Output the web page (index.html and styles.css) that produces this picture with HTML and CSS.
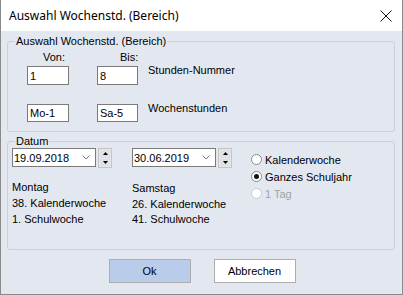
FILE: index.html
```html
<!DOCTYPE html>
<html lang="de">
<head>
    <meta charset="UTF-8">
    <title>Auswahl Wochenstd. (Bereich)</title>
    <link rel="stylesheet" href="styles.css">
</head>
<body>
    <div class="window">
        <div class="titlebar">
            <span class="title">Auswahl Wochenstd. (Bereich)</span>
            <svg class="close" width="12" height="12" viewBox="0 0 12 12">
                <path d="M0.5 0.5 L11.5 11.5 M11.5 0.5 L0.5 11.5" stroke="#111" stroke-width="1" fill="none"/>
            </svg>
        </div>

        <div class="content">
            <fieldset class="group">
                <legend>Auswahl Wochenstd. (Bereich)</legend>
                <div class="range">
                    <div class="range-row">
                        <span class="head von">Von:</span>
                        <span class="head bis">Bis:</span>
                    </div>
                    <div class="range-row">
                        <input type="text" class="field first" value="1">
                        <input type="text" class="field second" value="8">
                        <span class="row-label">Stunden-Nummer</span>
                    </div>
                    <div class="range-row lower">
                        <input type="text" class="field first" value="Mo-1">
                        <input type="text" class="field second" value="Sa-5">
                        <span class="row-label">Wochenstunden</span>
                    </div>
                </div>
            </fieldset>

            <fieldset class="group datum">
                <legend>Datum</legend>
                <div class="datum-body">
                    <div class="date-col">
                        <div class="picker">
                            <div class="combo">
                                <span>19.09.2018</span>
                                <svg width="8" height="5" viewBox="0 0 8 5"><path d="M0.5 0.5 L4 4 L7.5 0.5" stroke="#777" fill="none"/></svg>
                            </div>
                            <div class="spin">
                                <span class="spin-btn"><svg width="5" height="3" viewBox="0 0 5 3"><path d="M2.5 0 L5 3 L0 3 Z" fill="#000"/></svg></span>
                                <span class="spin-btn"><svg width="5" height="3" viewBox="0 0 5 3"><path d="M0 0 L5 0 L2.5 3 Z" fill="#000"/></svg></span>
                            </div>
                        </div>
                        <div class="info">
                            <div>Montag</div>
                            <div>38. Kalenderwoche</div>
                            <div>1. Schulwoche</div>
                        </div>
                    </div>

                    <div class="date-col">
                        <div class="picker">
                            <div class="combo">
                                <span>30.06.2019</span>
                                <svg width="8" height="5" viewBox="0 0 8 5"><path d="M0.5 0.5 L4 4 L7.5 0.5" stroke="#777" fill="none"/></svg>
                            </div>
                            <div class="spin">
                                <span class="spin-btn"><svg width="5" height="3" viewBox="0 0 5 3"><path d="M2.5 0 L5 3 L0 3 Z" fill="#000"/></svg></span>
                                <span class="spin-btn"><svg width="5" height="3" viewBox="0 0 5 3"><path d="M0 0 L5 0 L2.5 3 Z" fill="#000"/></svg></span>
                            </div>
                        </div>
                        <div class="info later">
                            <div>Samstag</div>
                            <div>26. Kalenderwoche</div>
                            <div>41. Schulwoche</div>
                        </div>
                    </div>

                    <div class="radios">
                        <label class="radio"><span class="dot"></span>Kalenderwoche</label>
                        <label class="radio checked"><span class="dot"></span>Ganzes Schuljahr</label>
                        <label class="radio disabled"><span class="dot"></span>1 Tag</label>
                    </div>
                </div>
            </fieldset>

            <div class="buttons">
                <button class="btn default">Ok</button>
                <button class="btn">Abbrechen</button>
            </div>
        </div>
    </div>
</body>
</html>
```

FILE: styles.css
```css
body {
    margin: 0;
    font-family: "Liberation Sans", Arial, sans-serif;
    font-size: 11px;
    color: #000;
}

.window {
    width: 403px;
    height: 295px;
    box-sizing: border-box;
    border: 1px solid #8a8a8a;
    border-top: none;
    background-color: #e3e8f0;
}

.titlebar {
    height: 31px;
    background: #fff;
    display: flex;
    align-items: center;
    justify-content: space-between;
    padding: 0 10px 0 8px;
}

.title {
    font-family: "Noto Sans", sans-serif;
    font-size: 12px;
}

.close {
    display: block;
}

.content {
    padding: 4px 7px 0 6px;
}

/* group boxes */
.group {
    margin: 0;
    padding: 0;
    min-width: 0;
    border: 1px solid #cdd1d7;
    border-radius: 3px;
}

.group legend {
    margin-left: 7px;
    padding: 0 1px;
    line-height: 13px;
}

.range {
    padding: 3px 0 9px 19px;
}

.range-row {
    display: flex;
    align-items: flex-start;
    line-height: 13px;
}

.range-row.lower {
    margin-top: 19px;
}

.head.von {
    width: 70px;
    box-sizing: border-box;
    padding-left: 16px;
}

.head.bis {
    padding-left: 23px;
}

.field {
    height: 19px;
    box-sizing: border-box;
    margin: 2px 0 0 0;
    padding: 0 2px;
    border: 1px solid #7a7a7a;
    background: #fff;
    font-family: inherit;
    font-size: 11px;
    color: #000;
}

.lower .field {
    height: 18px;
    margin-top: 0;
}

.field.first {
    width: 42px;
    margin-right: 28px;
}

.field.second {
    width: 41px;
    margin-right: 10px;
}

.row-label {
    margin-top: 0;
}

.lower .row-label {
    margin-top: -2px;
}

/* Datum */
.datum {
    margin-top: 3px;
}

.datum-body {
    display: flex;
    height: 101px;
    padding-left: 4px;
}

.date-col {
    width: 100px;
    margin-right: 20px;
}

.picker {
    display: flex;
    gap: 2px;
}

.combo {
    width: 84px;
    height: 19px;
    box-sizing: border-box;
    border: 1px solid #7a7a7a;
    background: #fff;
    display: flex;
    align-items: center;
    justify-content: space-between;
    padding: 0 5px 0 1px;
}

.combo svg {
    display: block;
}

.spin {
    width: 14px;
    height: 20px;
    box-sizing: border-box;
    border: 1px solid #c4c4c4;
    display: flex;
    flex-direction: column;
    gap: 1px;
    padding: 1px;
}

.spin-btn {
    flex: 1;
    background: #e1e1e1;
    display: flex;
    align-items: center;
    justify-content: center;
}

.spin-btn svg {
    display: block;
}

.info {
    margin-top: 11px;
    line-height: 16px;
    white-space: nowrap;
}

.info.later {
    margin-top: 13px;
    line-height: 15.5px;
}

.radios {
    margin-left: -1px;
    padding-top: 3px;
}

.radio {
    display: flex;
    align-items: center;
    height: 17px;
}

.dot {
    width: 11px;
    height: 11px;
    box-sizing: border-box;
    border: 1px solid #8c8c8c;
    border-radius: 50%;
    background: #fff;
    margin-right: 3px;
    display: flex;
    align-items: center;
    justify-content: center;
}

.radio.checked .dot::after {
    content: "";
    width: 5px;
    height: 5px;
    border-radius: 50%;
    background: #111;
}

.radio.disabled {
    color: #a2a2a2;
}

.radio.disabled .dot {
    border-color: #c4cad3;
}

/* buttons */
.buttons {
    display: flex;
    justify-content: center;
    gap: 23px;
    margin: 9px 0 0 2px;
}

.btn {
    width: 82px;
    height: 24px;
    border: 1px solid #adadad;
    background: #fff;
    font-family: inherit;
    font-size: 11px;
    color: #000;
    padding: 0;
}

.btn.default {
    background-color: #b9cce9;
}
```
